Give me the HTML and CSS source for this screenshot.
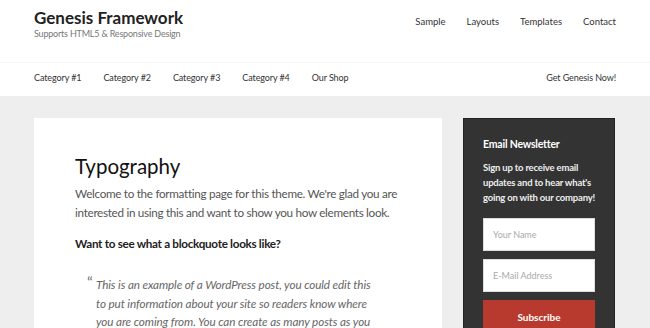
FILE: index.html
```html
<!DOCTYPE html>
<html lang="en">

<head>
    <meta charset="UTF-8">
    <meta name="viewport" content="width=device-width, initial-scale=1.0">
    <title>Genesis Framework</title>
    <link rel="stylesheet" href="styles.css">
</head>

<body>

    <header class="site-header">
        <div class="wrap header-wrap">
            <div class="title-area">
                <h1 class="site-title">Genesis Framework</h1>
                <p class="site-description">Supports HTML5 &amp; Responsive Design</p>
            </div>
            <nav class="nav-primary">
                <a href="#">Sample</a>
                <a href="#">Layouts</a>
                <a href="#">Templates</a>
                <a href="#">Contact</a>
            </nav>
        </div>
    </header>

    <nav class="nav-secondary">
        <div class="wrap nav-wrap">
            <div class="nav-left">
                <a href="#">Category #1</a>
                <a href="#">Category #2</a>
                <a href="#">Category #3</a>
                <a href="#">Category #4</a>
                <a href="#">Our Shop</a>
            </div>
            <a href="#" class="nav-cta">Get Genesis Now!</a>
        </div>
    </nav>

    <div class="site-inner">
        <div class="wrap content-wrap">
            <main class="content">
                <article class="entry">
                    <h2 class="entry-title">Typography</h2>
                    <p>Welcome to the formatting page for this theme. We're glad you are interested in using this and want to show you how elements look.</p>
                    <h4>Want to see what a blockquote looks like?</h4>
                    <blockquote>
                        <p>This is an example of a WordPress post, you could edit this to put information about your site so readers know where you are coming from. You can create as many posts as you like in order to share with your readers.</p>
                    </blockquote>
                </article>
            </main>

            <aside class="sidebar">
                <section class="widget enews">
                    <h4 class="widget-title">Email Newsletter</h4>
                    <p>Sign up to receive email updates and to hear what's going on with our company!</p>
                    <form>
                        <input type="text" placeholder="Your Name">
                        <input type="email" placeholder="E-Mail Address">
                        <button type="button">Subscribe</button>
                    </form>
                </section>
            </aside>
        </div>
    </div>

</body>

</html>
```

FILE: styles.css
```css
* {
    margin: 0;
    padding: 0;
    box-sizing: border-box;
}

body {
    font-family: Lato, "Open Sans", sans-serif;
    background-color: #eeeeee;
    color: #333;
    overflow: hidden;
}

a {
    color: #333;
    text-decoration: none;
}

.wrap {
    margin: 0 34px;
}

/* header */

.site-header {
    background-color: #fff;
}

.header-wrap {
    display: flex;
    justify-content: space-between;
    align-items: flex-start;
    height: 62px;
}

.site-title {
    font-size: 17px;
    font-weight: 700;
    color: #222;
    margin-top: 8px;
    line-height: 20px;
}

.site-description {
    font-size: 9px;
    letter-spacing: -0.2px;
    color: #777;
    margin-top: 0;
}

.nav-primary {
    display: flex;
    gap: 21px;
    margin-top: 16px;
}

.nav-primary a {
    font-size: 9.5px;
    color: #333;
}

/* secondary nav */

.nav-secondary {
    background-color: #fff;
    border-top: 1px solid #f6f6f6;
}

.nav-wrap {
    display: flex;
    justify-content: space-between;
    align-items: center;
    height: 33px;
    padding-bottom: 4px;
}

.nav-left {
    display: flex;
    gap: 22px;
}

.nav-secondary a {
    font-size: 9px;
    letter-spacing: -0.1px;
    color: #333;
}

/* content */

.site-inner {
    padding-top: 22px;
}

.content-wrap {
    display: flex;
    gap: 21px;
    align-items: flex-start;
}

.content {
    width: 408px;
    background-color: #fff;
    padding: 36px 41px 40px;
}

.entry-title {
    font-size: 20.5px;
    font-weight: 400;
    color: #111;
    line-height: 24px;
    margin-bottom: 6px;
}

.entry p {
    font-size: 11.7px;
    letter-spacing: -0.3px;
    line-height: 19px;
    color: #555;
}

.entry h4 {
    font-size: 11.7px;
    letter-spacing: -0.3px;
    font-weight: 700;
    color: #222;
    margin-top: 14px;
}

blockquote {
    margin: 25px 25px 0 21px;
    position: relative;
}

blockquote::before {
    content: "\201C";
    position: absolute;
    left: -9px;
    top: -3px;
    font-size: 16px;
    color: #777;
}

.entry blockquote p {
    font-style: italic;
    letter-spacing: -0.1px;
    color: #666;
    line-height: 18.5px;
}

/* sidebar */

.sidebar {
    width: 152px;
}

.enews {
    background-color: #333;
    border: 1px solid #222;
    color: #eee;
    padding: 19px 19px 30px;
}

.widget-title {
    font-size: 10.5px;
    letter-spacing: -0.2px;
    font-weight: 700;
    color: #fff;
    margin-bottom: 10px;
}

.enews p {
    font-size: 9.5px;
    letter-spacing: -0.2px;
    line-height: 15px;
    font-weight: 700;
    margin-bottom: 13px;
}

.enews input {
    display: block;
    width: 100%;
    height: 33px;
    border: 1px solid #ddd;
    padding: 0 9px;
    font-family: Lato, sans-serif;
    font-size: 9px;
    margin-bottom: 8px;
}

.enews input::placeholder {
    color: #aaa;
}

.enews button {
    display: block;
    width: 100%;
    height: 33px;
    border: none;
    background-color: #b83a2e;
    color: #fff;
    font-family: Lato, sans-serif;
    font-weight: 700;
    font-size: 10px;
}
```
